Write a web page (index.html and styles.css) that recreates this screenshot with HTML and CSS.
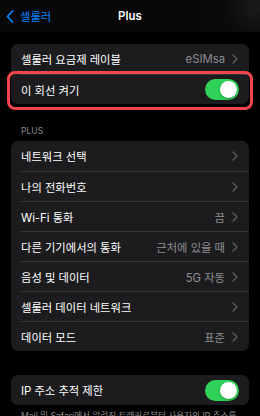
FILE: index.html
```html
<!DOCTYPE html>
<html lang="ko">
<head>
    <meta charset="UTF-8">
    <meta name="viewport" content="width=device-width, initial-scale=1.0">
    <title>Plus</title>
    <link rel="stylesheet" href="styles.css">
</head>
<body>

    <div class="navbar">
        <div class="back">
            <svg width="8" height="13" viewBox="0 0 8 13"><path d="M6.5 1L1.5 6.5L6.5 12" fill="none" stroke="#0a84ff" stroke-width="1.8" stroke-linecap="round" stroke-linejoin="round"/></svg>
            <span>셀룰러</span>
        </div>
        <div class="title">Plus</div>
        <div></div>
    </div>

    <div class="content">
        <div class="card first">
            <div class="row">
                <div class="row-inner">
                    <span class="label">셀룰러 요금제 레이블</span>
                    <span class="value">eSIMsa</span>
                    <svg class="chev" width="6" height="10" viewBox="0 0 6 10"><path d="M1 1l4 4-4 4" fill="none" stroke="#5c5c61" stroke-width="1.4" stroke-linecap="round" stroke-linejoin="round"/></svg>
                </div>
            </div>
            <div class="row marked">
                <div class="row-inner">
                    <span class="label">이 회선 켜기</span>
                    <div class="toggle"><div class="knob"></div></div>
                </div>
                <div class="highlight"></div>
            </div>
        </div>

        <div class="section-title">PLUS</div>
        <div class="card">
            <div class="row">
                <div class="row-inner">
                    <span class="label">네트워크 선택</span>
                    <svg class="chev" width="6" height="10" viewBox="0 0 6 10"><path d="M1 1l4 4-4 4" fill="none" stroke="#5c5c61" stroke-width="1.4" stroke-linecap="round" stroke-linejoin="round"/></svg>
                </div>
            </div>
            <div class="row">
                <div class="row-inner">
                    <span class="label">나의 전화번호</span>
                    <svg class="chev" width="6" height="10" viewBox="0 0 6 10"><path d="M1 1l4 4-4 4" fill="none" stroke="#5c5c61" stroke-width="1.4" stroke-linecap="round" stroke-linejoin="round"/></svg>
                </div>
            </div>
            <div class="row">
                <div class="row-inner">
                    <span class="label">Wi-Fi 통화</span>
                    <span class="value">끔</span>
                    <svg class="chev" width="6" height="10" viewBox="0 0 6 10"><path d="M1 1l4 4-4 4" fill="none" stroke="#5c5c61" stroke-width="1.4" stroke-linecap="round" stroke-linejoin="round"/></svg>
                </div>
            </div>
            <div class="row">
                <div class="row-inner">
                    <span class="label">다른 기기에서의 통화</span>
                    <span class="value">근처에 있을 때</span>
                    <svg class="chev" width="6" height="10" viewBox="0 0 6 10"><path d="M1 1l4 4-4 4" fill="none" stroke="#5c5c61" stroke-width="1.4" stroke-linecap="round" stroke-linejoin="round"/></svg>
                </div>
            </div>
            <div class="row">
                <div class="row-inner">
                    <span class="label">음성 및 데이터</span>
                    <span class="value">5G 자동</span>
                    <svg class="chev" width="6" height="10" viewBox="0 0 6 10"><path d="M1 1l4 4-4 4" fill="none" stroke="#5c5c61" stroke-width="1.4" stroke-linecap="round" stroke-linejoin="round"/></svg>
                </div>
            </div>
            <div class="row">
                <div class="row-inner">
                    <span class="label">셀룰러 데이터 네트워크</span>
                    <svg class="chev" width="6" height="10" viewBox="0 0 6 10"><path d="M1 1l4 4-4 4" fill="none" stroke="#5c5c61" stroke-width="1.4" stroke-linecap="round" stroke-linejoin="round"/></svg>
                </div>
            </div>
            <div class="row">
                <div class="row-inner">
                    <span class="label">데이터 모드</span>
                    <span class="value">표준</span>
                    <svg class="chev" width="6" height="10" viewBox="0 0 6 10"><path d="M1 1l4 4-4 4" fill="none" stroke="#5c5c61" stroke-width="1.4" stroke-linecap="round" stroke-linejoin="round"/></svg>
                </div>
            </div>
        </div>

        <div class="card spaced">
            <div class="row">
                <div class="row-inner">
                    <span class="label">IP 주소 추적 제한</span>
                    <div class="toggle"><div class="knob"></div></div>
                </div>
            </div>
        </div>
        <p class="footnote">Mail 및 Safari에서 알려진 트래커로부터 사용자의 IP 주소를 숨겨 보호합니다.</p>
    </div>

</body>
</html>
```

FILE: styles.css
```css
* {
    margin: 0;
    padding: 0;
    box-sizing: border-box;
}

body {
    width: 260px;
    height: 416px;
    overflow: hidden;
    background: #000;
    color: #fff;
    font-family: Inter, "Noto Sans CJK KR", sans-serif;
    font-size: 11.3px;
}

.navbar {
    height: 32px;
    display: grid;
    grid-template-columns: 1fr auto 1fr;
    align-items: center;
    background: radial-gradient(circle at 255px 8px, #1a1a1a 0, #0b0b0b 30px, #080808 60px);
}

.back {
    display: flex;
    align-items: center;
    gap: 6px;
    padding-left: 6px;
    color: #0a84ff;
    font-size: 11.3px;
}

.title {
    font-weight: 600;
    font-size: 11.5px;
}

.content {
    padding: 0 11px;
}

.card {
    background: #1c1c1e;
    border-radius: 7px;
}

.card.first {
    margin-top: 12px;
}

.card.spaced {
    margin-top: 24px;
}

.row {
    position: relative;
    padding-left: 10px;
}

.row-inner {
    height: 30px;
    display: flex;
    align-items: center;
    padding-right: 10px;
}

.row + .row .row-inner {
    border-top: 0.6px solid #38383a;
}

.label {
    flex: 1;
    white-space: nowrap;
}

.value {
    color: #8d8d93;
    margin-right: 7px;
}

.chev {
    margin-right: 1px;
}

.toggle {
    width: 34px;
    height: 21px;
    border-radius: 11px;
    background: #30d158;
    display: flex;
    justify-content: flex-end;
    align-items: center;
    padding: 2px;
}

.knob {
    width: 17px;
    height: 17px;
    border-radius: 50%;
    background: #fff;
    box-shadow: 0 1px 2px rgba(0, 0, 0, 0.3);
}

.highlight {
    position: absolute;
    top: -3px;
    bottom: -6px;
    left: -4px;
    right: -4px;
    border: 3px solid #f0454b;
    border-radius: 8px;
}

.section-title {
    padding: 22px 10px 5px;
    line-height: 10px;
    font-size: 8.6px;
    color: #8d8d93;
}

.footnote {
    padding: 5px 10px 0;
    font-size: 8.6px;
    line-height: 12px;
    color: #8d8d93;
}
```
